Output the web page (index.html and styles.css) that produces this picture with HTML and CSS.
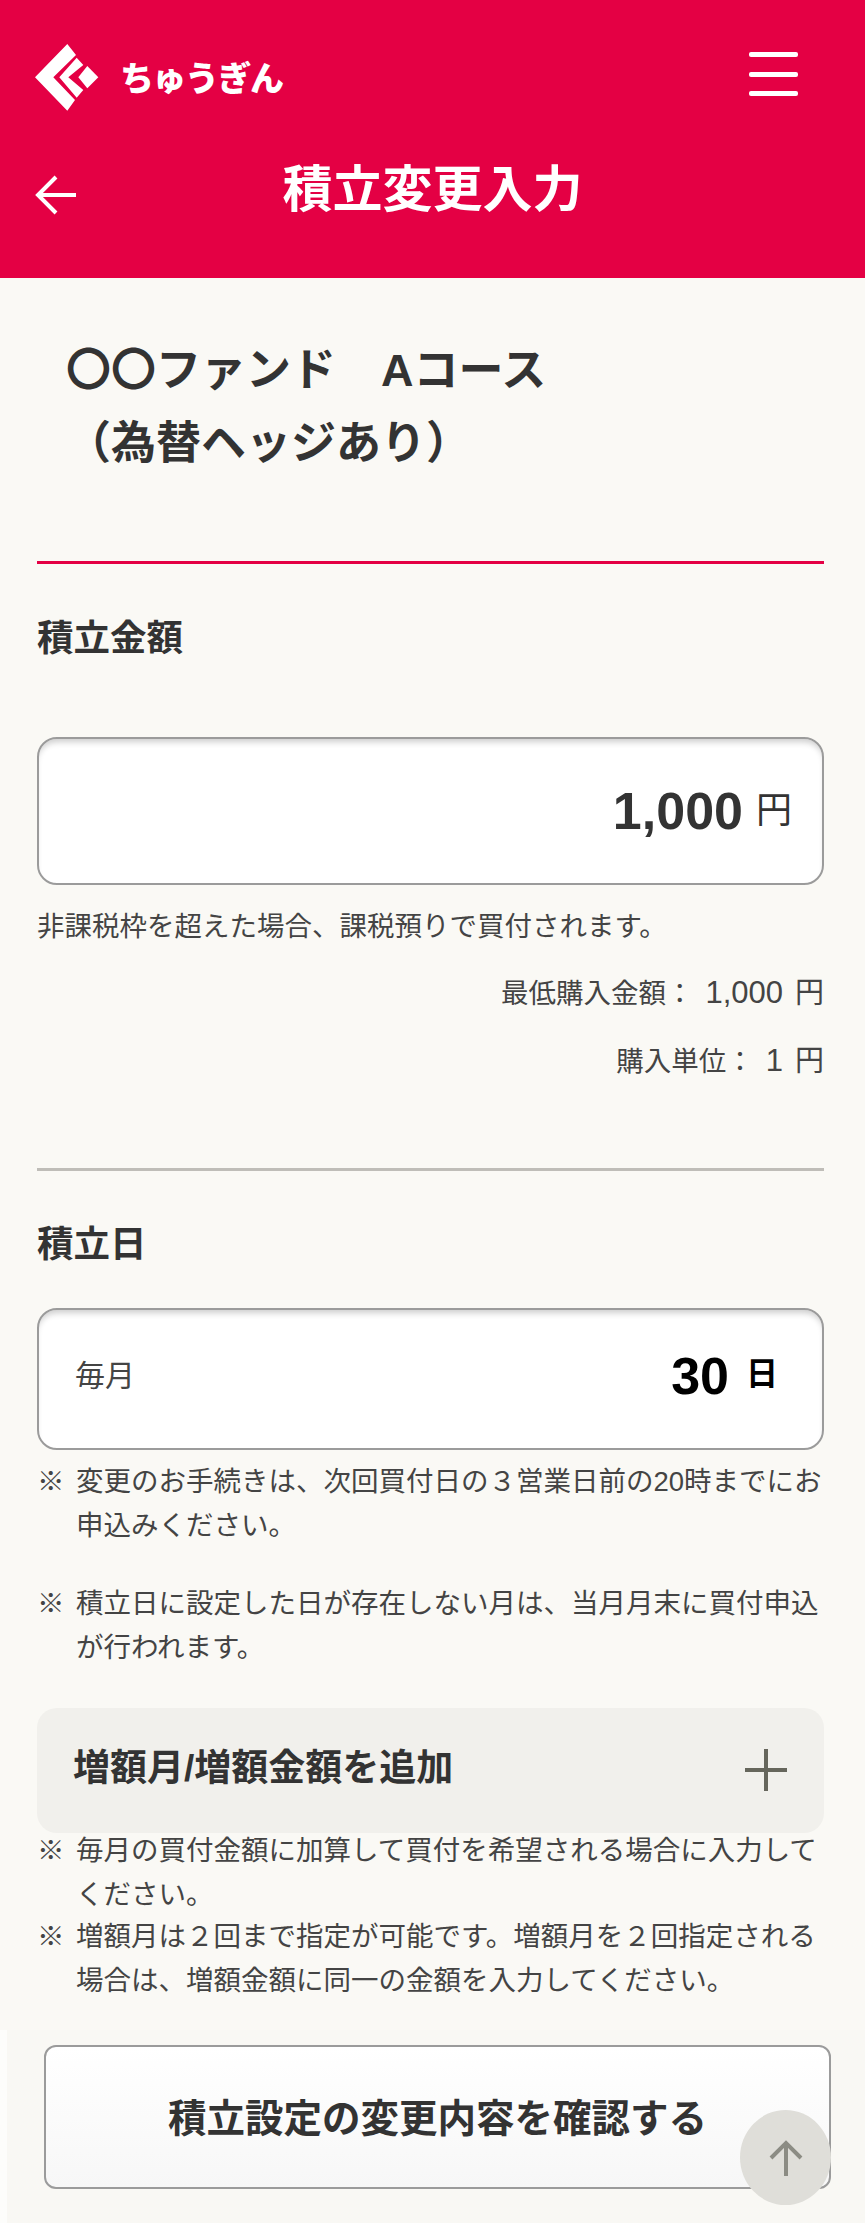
FILE: index.html
```html
<!DOCTYPE html>
<html lang="ja">
<head>
<meta charset="utf-8">
<title>積立変更入力</title>
<link rel="stylesheet" href="styles.css">
</head>
<body>
<header class="header">
  <div class="topbar">
    <div class="brand">
      <svg class="brand-mark" viewBox="0 0 64 67" aria-hidden="true">
        <path fill="#fff" d="M32.300 0 41 11 18.300 33.300 40 56 32.300 66.700 0 33.300Z"/>
        <path fill="#fff" d="M41.700 13.700 48.300 21 33.300 33.300 48.300 46 41.700 53.700 24.300 33.300Z"/>
        <path fill="#fff" d="M52.300 22 63.300 33.300 52.300 44.300 43.300 33.300Z"/>
      </svg>
      <span class="brand-name">ちゅうぎん</span>
    </div>
    <button class="menu" aria-label="menu"><span></span><span></span><span></span></button>
  </div>
  <div class="titlebar">
    <svg class="back" viewBox="0 0 42 40" aria-hidden="true">
      <path d="M41 20H3M21 2 3 20 21 38" fill="none" stroke="#fff" stroke-width="4"/>
    </svg>
    <h1 class="page-title">積立変更入力</h1>
  </div>
</header>
<main class="main">
  <h2 class="product">〇〇ファンド　Aコース<br>（為替ヘッジあり）</h2>
  <section class="section section-red">
    <h3 class="label label-amount">積立金額</h3>
    <div class="field field-amount">
      <span class="amount">1,000</span><span class="unit">円</span>
    </div>
    <p class="note-plain">非課税枠を超えた場合、課税預りで買付されます。</p>
    <p class="meta meta-first">最低購入金額：<span class="meta-value">1,000</span><span class="meta-unit">円</span></p>
    <p class="meta">購入単位：<span class="meta-value">1</span><span class="meta-unit">円</span></p>
  </section>
  <section class="section section-grey">
    <h3 class="label label-day">積立日</h3>
    <div class="field field-day">
      <span class="each">毎月</span>
      <span class="day"><b class="day-num">30</b><b class="day-unit">日</b></span>
    </div>
    <ul class="notes notes-day">
      <li>変更のお手続きは、次回買付日の３営業日前の20時までにお申込みください。</li>
      <li>積立日に設定した日が存在しない月は、当月月末に買付申込が行われます。</li>
    </ul>
    <div class="accordion">
      <span>増額月/増額金額を追加</span>
      <svg class="plus" viewBox="0 0 42 42" aria-hidden="true"><path d="M0 21H42M21 0V42" stroke="#66665c" stroke-width="4" fill="none"/></svg>
    </div>
    <ul class="notes notes-add">
      <li>毎月の買付金額に加算して買付を希望される場合に入力してください。</li>
      <li>増額月は２回まで指定が可能です。増額月を２回指定される場合は、増額金額に同一の金額を入力してください。</li>
    </ul>
  </section>
  <div class="band">
    <div class="actions">
      <button class="confirm">積立設定の変更内容を確認する</button>
    </div>
  </div>
</main>
<a class="to-top" aria-label="top">
  <svg viewBox="0 0 34 36" aria-hidden="true"><path d="M17 36V3M2 18 17 3 32 18" fill="none" stroke="#8c8c84" stroke-width="4"/></svg>
</a>
</body>
</html>
```
FILE: styles.css
```css
* { box-sizing: border-box; }
html, body { margin: 0; padding: 0; }
body {
  position: relative;
  width: 865px;
  height: 2223px;
  overflow: hidden;
  background: #faf9f5;
  color: #333;
  font-family: "Liberation Sans", "Noto Sans CJK JP", sans-serif;
}
h1, h2, h3, p, ul { margin: 0; padding: 0; }
.header { height: 278px; background: #e40044; color: #fff; padding: 44px 35px 0; }
.topbar { display: flex; justify-content: space-between; align-items: flex-start; height: 67px; }
.brand { display: flex; align-items: flex-start; gap: 21px; }
.brand-mark { width: 64px; height: 67px; display: block; }
.brand-name { font-size: 34px; font-weight: 900; line-height: 1; letter-spacing: -1.500px; margin-top: 16px; font-family: "Noto Sans CJK JP", sans-serif; }
.menu { display: flex; flex-direction: column; gap: 14.500px; width: 49px; padding: 8px 0 0; margin-right: 32px; background: none; border: 0; }
.menu span { display: block; height: 5px; background: #fff; border-radius: 2px; }
.titlebar { position: relative; display: flex; justify-content: center; height: 80px; margin-top: 43px; }
.back { position: absolute; left: 0; top: 21px; width: 42px; height: 40px; }
.page-title { font-size: 50px; line-height: 72px; font-weight: 700; }
.main { padding: 0 41px 0 37px; }
.product { padding: 56px 0 0 29px; font-size: 45px; line-height: 73px; font-weight: 700; }
.section-red { margin-top: 81px; border-top: 3px solid #e40044; }
.section-grey { margin-top: 84px; border-top: 3px solid #bfbdb8; }
.label { font-size: 36.500px; line-height: 52px; font-weight: 700; }
.label-amount { margin-top: 49px; }
.label-day { margin-top: 48px; }
.field { display: flex; align-items: center; background: #fff; border: 2px solid #9b9b9b; border-radius: 20px; box-shadow: inset 0 6px 6px -3px rgba(0, 0, 0, .2); }
.field-amount { justify-content: flex-end; height: 148px; margin-top: 72px; padding: 0 30px 0 0; }
.amount { font-size: 52px; font-weight: 700; line-height: 1; }
.unit { font-size: 36px; line-height: 1; margin-left: 13px; }
.note-plain { margin-top: 20px; font-size: 27.500px; line-height: 44px; color: #444; }
.meta { text-align: right; font-size: 27.500px; line-height: 44px; color: #444; margin-top: 23px; }
.meta-first { margin-top: 22px; }
.meta-value { font-size: 31px; margin-left: 12px; }
.meta-unit { font-size: 29px; margin-left: 12px; }
.field-day { justify-content: space-between; height: 142px; margin-top: 37px; padding: 0 44px 12px 36px; }
.each { font-size: 30px; color: #444; }
.day { display: flex; align-items: center; gap: 17px; margin-top: 6px; color: #000; }
.day-num { font-size: 52px; line-height: 1; }
.day-unit { font-size: 32px; line-height: 1; margin-top: -4px; }
.notes { list-style: none; font-size: 27.500px; line-height: 44px; color: #444; }
.notes li { position: relative; padding-left: 39px; }
.notes li::before { content: "※"; position: absolute; left: 0; top: 0; }
.notes-day { margin-top: 10px; }
.notes-day li + li { margin-top: 34px; }
.accordion { display: flex; justify-content: space-between; align-items: flex-start; height: 125px; margin-top: 38px; padding: 34px 37px 0 36px; background: #f1f0ec; border-radius: 20px; font-size: 37px; line-height: 54px; font-weight: 700; }
.plus { width: 42px; height: 42px; margin-top: 7px; display: block; }
.notes-add { margin-top: -4px; }
.notes-add li + li { margin-top: -2px; }
.band { margin: 27px -41px 0 -37px; padding-left: 7px; background: #fdfdfb; }
.actions { padding: 15px 34px 60px 37px; background: #f9f8f4; }
.confirm { display: flex; align-items: center; justify-content: center; width: 100%; height: 144px; padding: 4px 0 0; background: linear-gradient(#fff, #f7f7f7); border: 2px solid #9b9b9b; border-radius: 12px; color: #333; font: 700 38.500px/1 "Liberation Sans", "Noto Sans CJK JP", sans-serif; }
.to-top { position: absolute; left: 740px; top: 2110px; width: 91px; height: 95px; border-radius: 50%; background: #dfded9; display: flex; align-items: center; justify-content: center; }
.to-top svg { width: 34px; height: 36px; display: block; }
```
